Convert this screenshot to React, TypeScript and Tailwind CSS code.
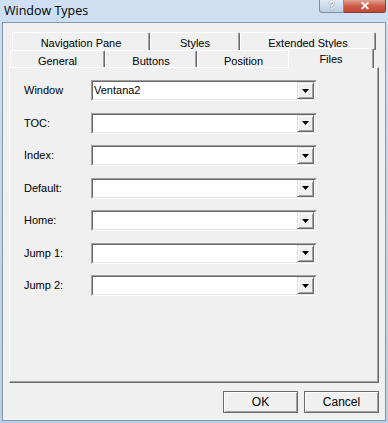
import React from "react";

const fontUI = { fontFamily: '"Liberation Sans", Arial, sans-serif' };

function Tab({ label, w, selected = false }: { label: string; w: number; selected?: boolean }) {
  return (
    <div
      style={{ width: w }}
      className={
        "flex shrink-0 items-start justify-center border-l border-t border-r border-l-white border-t-white border-r-[#696969] bg-[#f0f0f0] rounded-t-[2px] text-[11px] text-black " +
        (selected ? "relative z-10 -mx-[2px] -mt-[2px] h-[20px] pt-[2px] shadow-[inset_-1px_0_0_#a0a0a0]" : "h-[18px] pt-[2px] shadow-[inset_-1px_0_0_#a0a0a0]")
      }
    >
      {label}
    </div>
  );
}

function Combo({ value = "" }: { value?: string }) {
  return (
    <div className="flex h-[21px] w-[226px] border border-t-[#a0a0a0] border-l-[#a0a0a0] border-b-white border-r-white">
      <div className="flex flex-1 items-center border border-t-[#696969] border-l-[#696969] border-b-[#e3e3e3] border-r-[#e3e3e3] bg-white pr-[1px]">
        <span className="flex-1 pl-[1px] text-[11px] text-black">{value}</span>
        <div className="flex h-[17px] w-[17px] items-center justify-center border border-t-[#e3e3e3] border-l-[#e3e3e3] border-b-[#696969] border-r-[#696969] bg-[#f0f0f0] shadow-[inset_1px_1px_0_#fff,inset_-1px_-1px_0_#a0a0a0]">
          <svg width="7" height="4" viewBox="0 0 7 4">
            <path d="M0 0H7L3.5 4Z" fill="#000" />
          </svg>
        </div>
      </div>
    </div>
  );
}

function Btn({ label }: { label: string }) {
  return (
    <div className="flex h-[22px] w-[75px] items-center justify-center border border-[#696969] bg-[#f0f0f0] text-[12px] text-black shadow-[inset_1px_1px_0_#fff,inset_-1px_-1px_0_#a0a0a0]">
      {label}
    </div>
  );
}

export default function App() {
  const rows: [string, string][] = [
    ["Window", "Ventana2"],
    ["TOC:", ""],
    ["Index:", ""],
    ["Default:", ""],
    ["Home:", ""],
    ["Jump 1:", ""],
    ["Jump 2:", ""],
  ];
  return (
    <div
      className="flex h-[423px] w-[388px] flex-col overflow-hidden bg-gradient-to-b from-[#cfe0f3] via-[#c2d6ee] to-[#b9cfe9]"
      style={fontUI}
    >
      <div className="flex h-[22px] shrink-0 items-start justify-between">
        <span
          className="pl-[4px] pt-[3px] text-[12.5px] leading-[16px] text-black"
          style={{ fontFamily: '"Open Sans", "Noto Sans", sans-serif' }}
        >
          Window Types
        </span>
        <div className="mr-[2px] flex">
          <div className="flex h-[13px] w-[25px] items-start justify-center rounded-bl-[3px] border border-t-0 border-[#7d8fa6] bg-gradient-to-b from-[#e2ebf6] to-[#bccde2] text-[11px] font-bold leading-[11px] text-white [text-shadow:0_0_1px_#34465e]">
            ?
          </div>
          <div className="flex h-[13px] w-[42px] items-start justify-center rounded-br-[3px] border border-l-0 border-t-0 border-[#8b3a33] bg-gradient-to-b from-[#e3a193] via-[#cc5a48] to-[#c44737] text-[12px] font-bold leading-[12px] text-white">
            ✕
          </div>
        </div>
      </div>
      <div className="mx-[2px] mb-[2px] flex flex-1 flex-col border border-[#8597ab] bg-[#f0f0f0] px-[6px] pt-[9px]">
        <div className="flex flex-col">
          <div className="ml-[3px] flex">
            <Tab label="Navigation Pane" w={138} />
            <Tab label="Styles" w={90} />
            <Tab label="Extended Styles" w={136} />
          </div>
          <div className="ml-[1px] flex items-end">
            <Tab label="General" w={95} />
            <Tab label="Buttons" w={92} />
            <Tab label="Position" w={93} />
            <Tab label="Files" w={86} selected />
          </div>
          <div className="-mt-[1px] flex h-[316px] w-[370px] flex-col gap-[11.5px] border border-l-white border-t-white border-b-[#696969] border-r-[#696969] pl-[14px] pt-[12px] shadow-[inset_-1px_-1px_0_#a0a0a0]">
            {rows.map(([l, v]) => (
              <div key={l} className="flex items-center">
                <span className="w-[67px] text-[11px] text-black">{l}</span>
                <Combo value={v} />
              </div>
            ))}
          </div>
        </div>
        <div className="mt-[8px] flex justify-end gap-[6px] pr-[-0px]">
          <Btn label="OK" />
          <Btn label="Cancel" />
        </div>
      </div>
    </div>
  );
}
